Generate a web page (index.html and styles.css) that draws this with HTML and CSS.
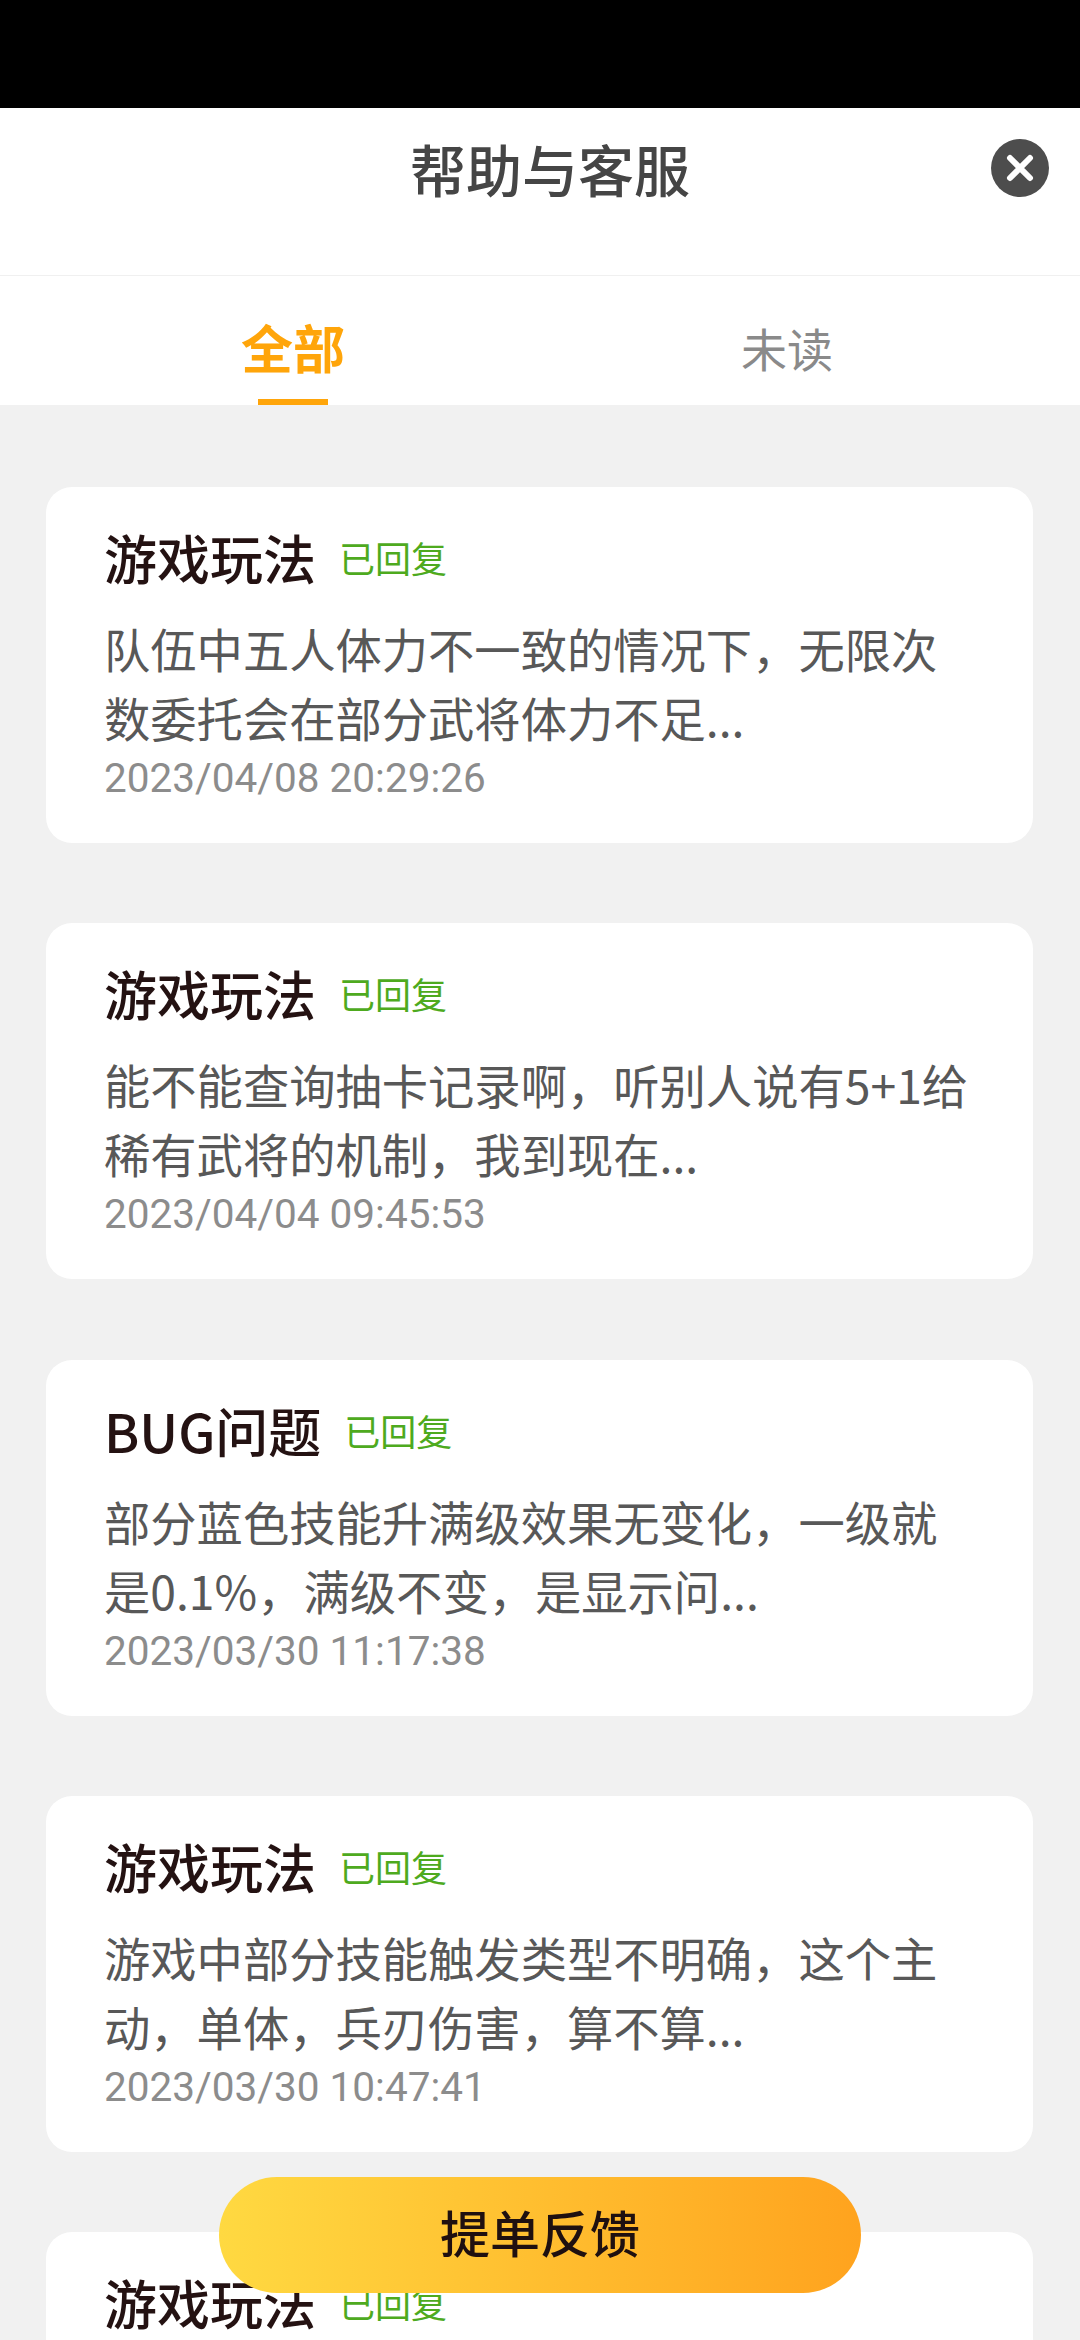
FILE: index.html
```html
<!DOCTYPE html>
<html lang="zh-CN">
<head>
  <meta charset="UTF-8" />
  <meta name="viewport" content="width=device-width, initial-scale=1" />
  <title>帮助与客服</title>
  <link rel="stylesheet" href="styles.css">
</head>
<body>
  <div class="status-bar"></div>

  <header class="top-bar">
    <h1>帮助与客服</h1>
    <button class="close-btn" aria-label="关闭">
      <svg viewBox="0 0 58 58" width="58" height="58">
        <circle cx="29" cy="29" r="29" fill="#4d4d4d" />
        <path d="M19 19 L39 39 M39 19 L19 39" stroke="#fff" stroke-width="6" stroke-linecap="round" />
      </svg>
    </button>
  </header>

  <nav class="tabs">
    <div class="tab active">全部</div>
    <div class="tab">未读</div>
  </nav>

  <main class="list">
    <section class="card">
      <div class="card-head">
        <h2>游戏玩法</h2>
        <span class="state">已回复</span>
      </div>
      <p class="desc">队伍中五人体力不一致的情况下，无限次数委托会在部分武将体力不足...</p>
      <div class="date">2023/04/08 20:29:26</div>
    </section>

    <section class="card">
      <div class="card-head">
        <h2>游戏玩法</h2>
        <span class="state">已回复</span>
      </div>
      <p class="desc">能不能查询抽卡记录啊，听别人说有5+1给稀有武将的机制，我到现在...</p>
      <div class="date">2023/04/04 09:45:53</div>
    </section>

    <section class="card">
      <div class="card-head">
        <h2>BUG问题</h2>
        <span class="state">已回复</span>
      </div>
      <p class="desc">部分蓝色技能升满级效果无变化，一级就是0.1%，满级不变，是显示问...</p>
      <div class="date">2023/03/30 11:17:38</div>
    </section>

    <section class="card">
      <div class="card-head">
        <h2>游戏玩法</h2>
        <span class="state">已回复</span>
      </div>
      <p class="desc">游戏中部分技能触发类型不明确，这个主动，单体，兵刃伤害，算不算...</p>
      <div class="date">2023/03/30 10:47:41</div>
    </section>

    <section class="card">
      <div class="card-head">
        <h2>游戏玩法</h2>
        <span class="state">已回复</span>
      </div>
    </section>
  </main>

  <button class="feedback-btn">提单反馈</button>
</body>
</html>
```

FILE: styles.css
```css
* {
  box-sizing: border-box;
}

html, body {
  margin: 0;
  padding: 0;
}

body {
  position: relative;
  width: 1080px;
  height: 2340px;
  overflow: hidden;
  background: #f1f1f1;
  font-family: "Noto Sans CJK SC", "Noto Sans", sans-serif;
}

.status-bar {
  height: 108px;
  background: #000;
}

.top-bar {
  position: relative;
  height: 168px;
  padding: 24px 0 0 20px;
  background: #fff;
  border-bottom: 1px solid #f0f0f0;
  text-align: center;
}

.top-bar h1 {
  margin: 0;
  font-size: 56px;
  line-height: 72px;
  font-weight: 500;
  color: #454545;
}

.close-btn {
  position: absolute;
  top: 31px;
  right: 31px;
  width: 58px;
  height: 58px;
  padding: 0;
  border: 0;
  background: none;
}

.close-btn svg {
  display: block;
}

.tabs {
  display: flex;
  height: 129px;
  padding: 0 46px;
  background: #fff;
}

.tab {
  position: relative;
  flex: 1;
  padding-top: 40px;
  text-align: center;
  font-size: 46px;
  line-height: 62px;
  color: #8a8a8a;
}

.tab.active {
  font-size: 52px;
  font-weight: 700;
  color: #ffa50a;
}

.tab.active::after {
  content: "";
  position: absolute;
  left: 0;
  right: 0;
  bottom: 0;
  width: 70px;
  height: 6px;
  margin: 0 auto;
  background: #ffa50a;
}

.list {
  display: flex;
  flex-direction: column;
  gap: 80.25px;
  height: 1935px;
  overflow: hidden;
  padding: 82px 47px 0 46px;
}

.card {
  flex: 0 0 auto;
  height: 356px;
  padding: 34px 58px 0 58px;
  background: #fff;
  border-radius: 26px;
}

.card-head {
  display: flex;
  align-items: center;
  gap: 23px;
  height: 72px;
}

.card-head h2 {
  margin: 0;
  font-size: 53px;
  line-height: 72px;
  font-weight: 500;
  color: #241212;
}

.state {
  font-size: 36px;
  color: #4eaa1e;
}

.desc {
  margin: 20px 0 0;
  font-size: 46.3px;
  line-height: 69px;
  color: #585858;
}

.date {
  font-family: Roboto, "Noto Sans", sans-serif;
  margin-top: 2px;
  font-size: 40.5px;
  line-height: 50px;
  color: #8c8c8c;
}

.feedback-btn {
  position: absolute;
  left: 219px;
  top: 2177px;
  width: 642px;
  height: 116px;
  padding: 0 0 8px;
  border: 0;
  border-radius: 58px;
  background: linear-gradient(90deg, #ffd941, #ffa31e);
  font-family: inherit;
  font-size: 50px;
  font-weight: 500;
  color: #1f1010;
}
```
